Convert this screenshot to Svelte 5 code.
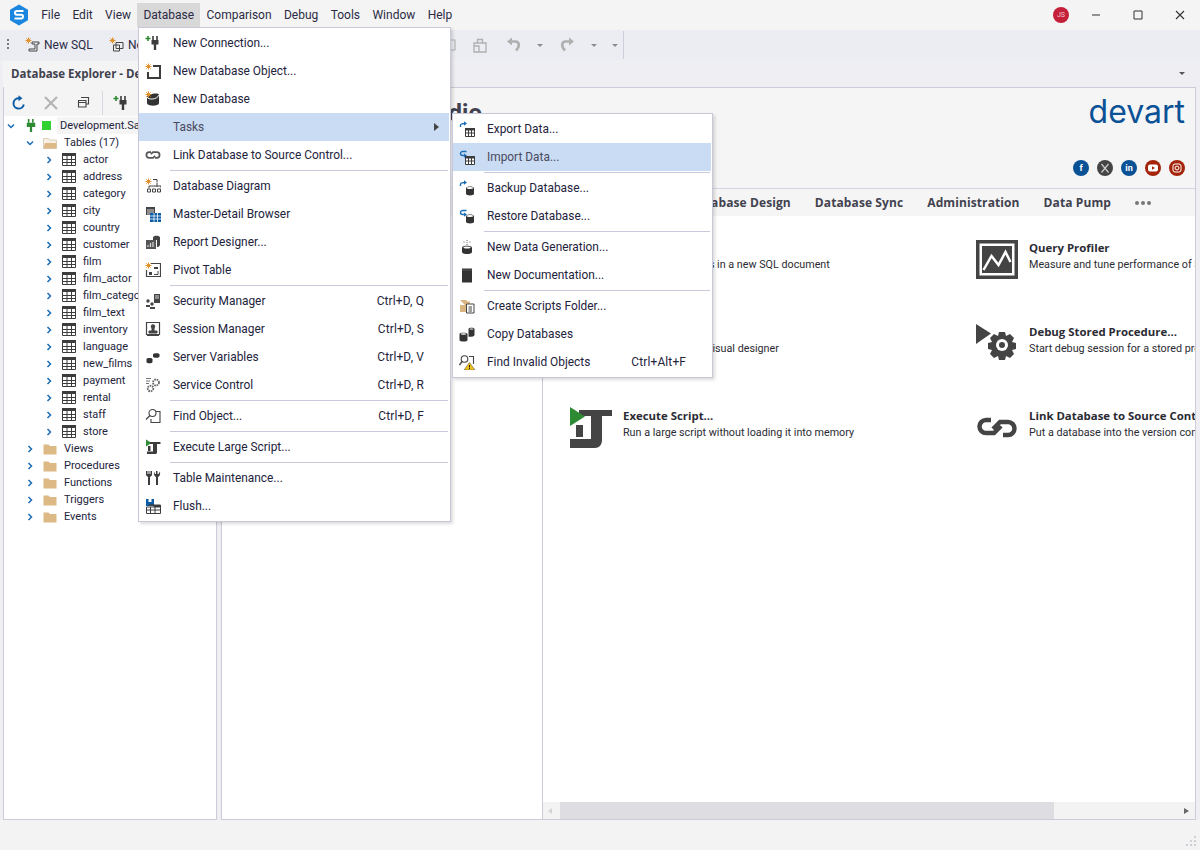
<script lang="ts">
  const star = '<path d="M3.5 .5v6M.5 3.5h6M1.4 1.4l4.2 4.2M5.6 1.4L1.4 5.6" stroke="#e0922f" fill="none"/>';
  const plug = '<path d="M8 1v4M12 1v4" stroke="#3c3c3c" stroke-width="1.6"/><path d="M6.5 5h7v4.5h-2.3V15H8.8V9.5H6.5z" fill="#3c3c3c"/>';
  const greenPlus = '<path d="M3 1v5M.5 3.5h5" stroke="#2f8a34" stroke-width="1.6"/>';
  const grid = '<path d="M6.5 7.5h9v8h-9z" fill="#fff" stroke="#3c3c3c"/><path d="M6 7h10v2.5H6z" fill="#3c3c3c"/><path d="M6.5 12h9M9.5 9v6M12.5 9v6" stroke="#3c3c3c"/>';
  const barrel = '<path d="M7 8.2c0-2.2 8-2.2 8 0v5.600c0 2.2-8 2.2-8 0z" fill="#333"/><ellipse cx="11" cy="8" rx="3.2" ry="1.1" fill="#fff"/>';
  const arrowOut = '<path d="M1.5 6V4.5C1.5 3 3 2.5 6 2.5" fill="none" stroke="#1a6cb5" stroke-width="1.4"/><path d="M5 .3l3 2.2-3 2.2z" fill="#1a6cb5"/>';
  const arrowIn = '<path d="M7.5 2.5H4C2 2.5 1.5 3.5 1.5 4.5S2 6.5 4 6.5h2" fill="none" stroke="#1a6cb5" stroke-width="1.4"/><path d="M5 4.5l3 2-3 2.2z" fill="#1a6cb5"/>';

  const icons: Record<string, string> = {
    connection: greenPlus + plug,
    object: star + '<path d="M8 3h7v12H3V9" fill="none" stroke="#3c3c3c" stroke-width="2"/>',
    database: '<path d="M2 6c0-3 12-5 12-2v8c0 3.5-12 3.5-12 0z" fill="#333"/><path d="M2 6c1 3 10 3 12-2" fill="none" stroke="#fff"/>' + star,
    link: '<path d="M6 5.2H4.2a2.8 2.8 0 0 0 0 5.6H8l2.2-2M10 10.8h1.8a2.8 2.8 0 0 0 0-5.6H8L5.8 7.2" fill="none" stroke="#555" stroke-width="1.7"/>',
    diagram: star + '<path d="M8 1.5h4v3M12 5v4M4 10V8h12v2" fill="none" stroke="#444"/><path d="M2.5 11h3v3h-3zM7.5 11h3v3h-3zM12.5 11h3v3h-3z" fill="none" stroke="#444"/>',
    master: '<path d="M1 1h9v8H1z" fill="#444"/><path d="M2 4h7M2 6h7M2 8h7" stroke="#fff" stroke-width=".8"/><path d="M5 7h11v9H5z" fill="#0d5ca6"/><path d="M5 10h11M5 13h11M9 7v9M12.5 7v9" stroke="#fff" stroke-width=".8"/>',
    report: '<path d="M1 6h10v9H1z" fill="#555"/><path d="M3 13V11M5.5 13V9M8 13V8" stroke="#ddd" stroke-width="1.2"/><path d="M8 3.5C8 1 15 1 15 3.5v7c0 2-2 2.5-3 2.5V6H8z" fill="#444"/>',
    pivot: star + '<path d="M6 1.5h9.5v13H1.5V8" fill="none" stroke="#444" stroke-width="1.2"/><path d="M4 10h3v3H4zM9 5h4v2H9z" fill="#444"/><path d="M9 12.5h4V9" fill="none" stroke="#444"/>',
    security: '<path d="M9 1h6v9H9z" fill="#444"/><path d="M10 3h4M10 5h4" stroke="#fff" stroke-width=".8"/><circle cx="3" cy="8" r="1.7" fill="#444"/><circle cx="7" cy="11" r="1.7" fill="#444"/><path d="M1 12h4v2H1zM5 14h5v2H5z" fill="#444"/>',
    session: '<path d="M1.5 1.5h13v12h-13z" fill="none" stroke="#444" stroke-width="1.2"/><circle cx="8" cy="5.5" r="2.2" fill="#444"/><path d="M7 7h2v3H7zM4 10h8v2H4zM2 14.5h12" stroke="#444" fill="#444"/>',
    variables: '<path d="M1.5 10c0-1.5 6-1.5 6 0v3c0 1.7-6 1.7-6 0z" fill="#333"/><path d="M8 5.5c0-1.8 6.5-1.8 6.5 0v2c0 1.7-6.5 1.7-6.5 0z" fill="#333"/>',
    service: '<circle cx="11" cy="5.5" r="3" fill="none" stroke="#666" stroke-width="1.8" stroke-dasharray="1.6 .8"/><circle cx="5.5" cy="11.5" r="2.8" fill="none" stroke="#666" stroke-width="1.8" stroke-dasharray="1.6 .8"/><path d="M1 1.5h5M1 4h4M1 6.5h3" stroke="#777"/>',
    find: '<circle cx="7.5" cy="5" r="3.5" fill="#fff" stroke="#444" stroke-width="1.1"/><path d="M5 7.5L1 11.5" stroke="#444" stroke-width="1.3"/><path d="M11 3.5h4v11H6V11" fill="none" stroke="#444" stroke-width="1.1"/>',
    script: '<path d="M1 .5l5.5 3.5L1 7.5z" fill="#2f8a34"/><path d="M5 3h10.5v2H12v8.5c0 1-1 1.5-2 1.5H2v-2.5h6V5H5z" fill="#3c3c3c"/><path d="M3 7h2.5v5H3z" fill="#3c3c3c"/>',
    maintenance: '<path d="M1 1v3.5c0 1 1 2 2 2.3V15h2V6.800c1-.3 2-1.3 2-2.3V1L5.5 1v3h-1V1h-1v3h-1V1z" fill="#3c3c3c"/><path d="M9 1.5c-.5 3 .5 5 2 5.5V15h2V7c1.5-.5 2.5-2.5 2-5.5L13.5 4h-1V1h-1.5v3H10z" fill="#3c3c3c"/>',
    flush: '<path d="M1 1h8v7H1z" fill="#0d5ca6"/><path d="M3.5 1h3v3h-3z" fill="#fff"/><path d="M4 7h11.5v8.5H1.5V9H9V7z" fill="#fff" stroke="#3c3c3c"/><path d="M9 7h6.5v2.5H9z" fill="#3c3c3c"/><path d="M1.5 12h14M5.5 9v6.5M10 9v6.5" stroke="#3c3c3c"/>',
    export: arrowOut + grid,
    import: arrowIn + grid,
    backup: arrowOut + barrel,
    restore: arrowIn + barrel,
    generation: '<path d="M3 8.5c0-2.2 10-2.2 10 0v4.5c0 2.8-10 2.8-10 0z" fill="#333"/><ellipse cx="8" cy="8.5" rx="3.5" ry="1.1" fill="#fff"/><path d="M8 1v5M5 2.5v2M11 2.5v2" stroke="#666" stroke-dasharray="1 1"/>',
    documentation: '<path d="M3 1.5h10v14H3z" fill="#333"/><path d="M3 3h10" stroke="#666" stroke-width=".7"/>',
    folder: '<path d="M1 2h6l1.5 1.5H11V8H1v6h5V7z" fill="#d8b583"/><path d="M1 7h8v7H1z" fill="#d8b583"/><path d="M7.5 6h7.5v9H7.5z" fill="#fff" stroke="#444"/><path d="M9.5 9h3.5M9.5 11h3.5M9.5 13h3.5" stroke="#444"/>',
    copy: '<path d="M.5 8c0-1.8 8-1.8 8 0v6c0 2-8 2-8 0z" fill="#333"/><ellipse cx="4.5" cy="8" rx="2.8" ry=".8" fill="#fff"/><path d="M9.5 3c0-1.8 6-1.8 6 0v6c0 1.3-2 1.8-6 1.8V6z" fill="#333"/><ellipse cx="12.5" cy="3" rx="2" ry=".6" fill="#fff"/>',
    invalid: '<circle cx="5.5" cy="5" r="3.3" fill="#fff" stroke="#444" stroke-width="1.1"/><path d="M3 7.5L.5 11" stroke="#444" stroke-width="1.3"/><path d="M10 2.5h4.5V10" fill="none" stroke="#444" stroke-width="1.1"/><path d="M10.5 8.5L16 16H5z" fill="#f2c21a" stroke="#444" stroke-width=".5"/><path d="M10.5 11v2.5M10.5 14v1" stroke="#222"/>'
  };

  type Item = { label?: string; icon?: string; keys?: string; sep?: boolean; active?: boolean; arrow?: boolean };

  const databaseMenu: Item[] = [
    { label: 'New Connection...', icon: 'connection' },
    { label: 'New Database Object...', icon: 'object' },
    { label: 'New Database', icon: 'database' },
    { label: 'Tasks', active: true, arrow: true },
    { label: 'Link Database to Source Control...', icon: 'link' },
    { sep: true },
    { label: 'Database Diagram', icon: 'diagram' },
    { label: 'Master-Detail Browser', icon: 'master' },
    { label: 'Report Designer...', icon: 'report' },
    { label: 'Pivot Table', icon: 'pivot' },
    { sep: true },
    { label: 'Security Manager', icon: 'security', keys: 'Ctrl+D, Q' },
    { label: 'Session Manager', icon: 'session', keys: 'Ctrl+D, S' },
    { label: 'Server Variables', icon: 'variables', keys: 'Ctrl+D, V' },
    { label: 'Service Control', icon: 'service', keys: 'Ctrl+D, R' },
    { sep: true },
    { label: 'Find Object...', icon: 'find', keys: 'Ctrl+D, F' },
    { sep: true },
    { label: 'Execute Large Script...', icon: 'script' },
    { sep: true },
    { label: 'Table Maintenance...', icon: 'maintenance' },
    { label: 'Flush...', icon: 'flush' }
  ];

  const tasksMenu: Item[] = [
    { label: 'Export Data...', icon: 'export' },
    { label: 'Import Data...', icon: 'import', active: true },
    { sep: true },
    { label: 'Backup Database...', icon: 'backup' },
    { label: 'Restore Database...', icon: 'restore' },
    { sep: true },
    { label: 'New Data Generation...', icon: 'generation' },
    { label: 'New Documentation...', icon: 'documentation' },
    { sep: true },
    { label: 'Create Scripts Folder...', icon: 'folder' },
    { label: 'Copy Databases', icon: 'copy' },
    { label: 'Find Invalid Objects', icon: 'invalid', keys: 'Ctrl+Alt+F' }
  ];

  const menuBar = ['File', 'Edit', 'View', 'Database', 'Comparison', 'Debug', 'Tools', 'Window', 'Help'];
  const tables = ['actor', 'address', 'category', 'city', 'country', 'customer', 'film', 'film_actor', 'film_category', 'film_text', 'inventory', 'language', 'new_films', 'payment', 'rental', 'staff', 'store'];
  const folders = ['Views', 'Procedures', 'Functions', 'Triggers', 'Events'];
  const tabs = ['Development', 'Database Design', 'Database Sync', 'Administration', 'Data Pump'];
</script>

{#snippet menuRows(items: Item[])}
  {#each items as item}
    {#if item.sep}
      <div class="sep"></div>
    {:else}
      <div class="row" class:active={item.active}>
        <span class="row-icon">
          {#if item.icon}
            <svg viewBox="0 0 16 16" width="16" height="16">{@html icons[item.icon]}</svg>
          {/if}
        </span>
        <span class="row-label">{item.label}</span>
        {#if item.keys}<span class="row-keys">{item.keys}</span>{/if}
        {#if item.arrow}<span class="row-arrow"></span>{/if}
      </div>
    {/if}
  {/each}
{/snippet}

{#snippet chevron(open: boolean)}
  <svg class="chevron" viewBox="0 0 8 8" width="8" height="8">
    {#if open}
      <path d="M1 2.5l3 3 3-3" fill="none" stroke="#1a6cb5" stroke-width="1.5"/>
    {:else}
      <path d="M2.5 1l3 3-3 3" fill="none" stroke="#1a6cb5" stroke-width="1.5"/>
    {/if}
  </svg>
{/snippet}

{#snippet folderIcon()}
  <svg class="tree-icon" viewBox="0 0 14 12" width="14" height="12">
    <path d="M.5 1.5h5L7 3h6.5v8.5H.5z" fill="#dcb985"/>
  </svg>
{/snippet}

<div class="app">
  <header class="titlebar">
    <svg class="logo" viewBox="0 0 20 22" width="20" height="22">
      <path d="M10 .5l9 5.2v10.6l-9 5.2-9-5.2V5.7z" fill="#1a86e0"/>
      <path d="M14.5 7H7.8C6.5 7 6 7.7 6 8.8s.5 1.9 1.8 1.9h4.4c1.3 0 1.8.8 1.8 1.8s-.5 2-1.8 2H5.5" fill="none" stroke="#fff" stroke-width="2"/>
    </svg>
    <nav class="menubar">
      {#each menuBar as name}
        <span class="menubar-item" class:open={name === 'Database'}>{name}</span>
      {/each}
    </nav>
    <span class="avatar">JS</span>
    <div class="window-buttons">
      <svg viewBox="0 0 10 10" width="10" height="10"><path d="M1 5h8" stroke="#333"/></svg>
      <svg viewBox="0 0 10 10" width="10" height="10"><path d="M1 1h8v8H1z" fill="none" stroke="#333"/></svg>
      <svg viewBox="0 0 10 10" width="10" height="10"><path d="M1 1l8 8M9 1l-8 8" stroke="#333" stroke-width="1.1"/></svg>
    </div>
  </header>

  <div class="toolbar">
    <span class="grip"></span>
    <button class="tool first">
      <svg viewBox="0 0 16 16" width="16" height="16">{@html star}<path d="M7 5h7v2h-2v7H4v-2h6V7H7z" fill="none" stroke="#444"/></svg>
      New SQL
    </button>
    <button class="tool second">
      <svg viewBox="0 0 16 16" width="16" height="16">{@html star}<path d="M7 5.5h7v6H7zM4.5 8h6v6h-6z" fill="#eceef2" stroke="#444"/></svg>
      New Query
    </button>
    <div class="tool-rest">
      <svg viewBox="0 0 16 16" width="16" height="16"><path d="M1 3h10v10H6" fill="none" stroke="#b4b4b4" stroke-width="1.2"/></svg>
      <svg class="bag" viewBox="0 0 16 16" width="16" height="16"><path d="M2 6h12v9H2zM2 9h5v6M5.5 6V2.5h5V6" fill="none" stroke="#b0b0b0" stroke-width="1.3"/></svg>
      <svg class="undo" viewBox="0 0 16 16" width="16" height="16"><path d="M3 4.5h6.5c3.5 0 5 4.5 .5 9" fill="none" stroke="#b0b0b0" stroke-width="2.6"/><path d="M6 .5v8L1 4.5z" fill="#b0b0b0"/></svg>
      <span class="caret c1"></span>
      <svg class="redo" viewBox="0 0 16 16" width="16" height="16"><path d="M13 4.5H6.5c-3.5 0-5 4.5-.5 9" fill="none" stroke="#b0b0b0" stroke-width="2.6"/><path d="M10 .5v8l5-4z" fill="#b0b0b0"/></svg>
      <span class="caret c2"></span>
      <span class="caret c3"></span>
      <span class="tool-sep"></span>
    </div>
  </div>

  <div class="tabstrip">
    <div class="panel-tab">Database Explorer - Development.Sakila</div>
    <span class="caret strip-caret"></span>
  </div>

  <main class="workspace">
    <aside class="explorer">
      <div class="explorer-tools">
        <svg viewBox="0 0 16 16" width="16" height="16"><path d="M12.8 9.5A5.2 5.2 0 1 1 8 3.2" fill="none" stroke="#0d5ca6" stroke-width="2"/><path d="M7.5 .2v6l4-3z" fill="#0d5ca6"/></svg>
        <svg class="gap-x" viewBox="0 0 16 16" width="16" height="16"><path d="M2 2l12 12M14 2L2 14" stroke="#b4b4b4" stroke-width="2.2"/></svg>
        <svg class="gap-w" viewBox="0 0 16 16" width="16" height="16"><path d="M6 2.5h7.5V9H11M3.5 5.5H11V12H3.5zM3.5 7.5H11" fill="none" stroke="#444" stroke-width="1.1"/></svg>
        <span class="explorer-sep"></span>
        <svg viewBox="0 0 16 16" width="16" height="16">{@html icons.connection}</svg>
      </div>
      <div class="tree">
        <div class="tree-row root">
          {@render chevron(true)}
          <svg class="root-plug" viewBox="0 0 12 16" width="12" height="15"><path d="M3.5 1v4M8 1v4" stroke="#2f8a34" stroke-width="1.7"/><path d="M1.5 5h9v4.5H7.2V15H4.8V9.5H1.5z" fill="#2f8a34"/></svg>
          <span class="root-status"></span>
          <span class="root-label">Development.Sakila</span>
        </div>
        <div class="tree-row level1">
          {@render chevron(true)}
          <svg class="tree-icon" viewBox="0 0 14 12" width="14" height="12"><path d="M.5 1.5h5L7 3h6.5v8.5H.5z" fill="#f6efe2" stroke="#d8cfbf"/><path d="M2 6h11.5v5.5H.5z" fill="#dcb985"/></svg>
          <span>Tables (17)</span>
        </div>
        {#each tables as table}
          <div class="tree-row level2">
            {@render chevron(false)}
            <svg class="tree-icon" viewBox="0 0 14 13" width="14" height="13"><path d="M.5 .5h13v12H.5z" fill="#fff" stroke="#3c3c3c"/><path d="M0 0h14v3H0z" fill="#3c3c3c"/><path d="M.5 6.5h13M.5 9.5h13M5 3v9M9.5 3v9" stroke="#3c3c3c"/></svg>
            <span>{table}</span>
          </div>
        {/each}
        {#each folders as folder}
          <div class="tree-row level1">
            {@render chevron(false)}
            {@render folderIcon()}
            <span>{folder}</span>
          </div>
        {/each}
      </div>
    </aside>

    <section class="document">
      <div class="doc-header">
        <div class="brand-row">
          <div class="product">dbForge Studio</div>
          <div class="brand-side">
            <div class="devart">devart</div>
            <div class="socials">
              <span class="social blue">f</span>
              <span class="social grey">
                <svg viewBox="0 0 16 16" width="16" height="16"><path d="M4.5 4l7 8.5M11.5 4l-7 8.5" stroke="#ccc" stroke-width="1.2"/></svg>
              </span>
              <span class="social blue">in</span>
              <span class="social red">
                <svg viewBox="0 0 16 16" width="16" height="16"><rect x="3" y="4.5" width="10" height="7" rx="2" fill="#fff"/><path d="M7 6.2v3.6L10 8z" fill="#a5250c"/></svg>
              </span>
              <span class="social red">
                <svg viewBox="0 0 16 16" width="16" height="16"><rect x="4" y="4" width="8" height="8" rx="2" fill="none" stroke="#fff"/><circle cx="8" cy="8" r="1.9" fill="none" stroke="#fff"/></svg>
              </span>
            </div>
          </div>
        </div>
        <div class="doc-tabs">
          {#each tabs as tab}
            <span class="doc-tab">{tab}</span>
          {/each}
          <span class="doc-more"><i></i><i></i><i></i></span>
        </div>
      </div>
      <div class="doc-body">
        <div class="doc-side"></div>
        <div class="doc-main">
          <div class="actions">
            <div class="action">
              <span class="action-icon"></span>
              <div><h4>SQL Editor</h4><p>Create SQL queries in a new SQL document</p></div>
            </div>
            <div class="action">
              <svg class="action-icon" viewBox="0 0 42 40"><path d="M0 0h42v39H0z" fill="#444"/><path d="M3.500 3.500h35v32h-35z" fill="#fff"/><path d="M6 6h30v27H6z" fill="#444"/><path d="M7.5 30l8-14 7 9 7-13 5 10" fill="none" stroke="#fff" stroke-width="2.5"/></svg>
              <div><h4>Query Profiler</h4><p>Measure and tune performance of SQL queries</p></div>
            </div>
            <div class="action">
              <span class="action-icon"></span>
              <div><h4>Query Builder</h4><p>Build queries in a visual designer</p></div>
            </div>
            <div class="action">
              <svg class="action-icon" viewBox="0 0 42 40"><path d="M0 0l15 9.5L0 20z" fill="#444"/><path d="M23 8h6l1 4 4-2 4 4-2 4 4 1v6l-4 1 2 4-4 4-4-2-1 4h-6l-1-4-4 2-4-4 2-4-4-1v-6l4-1-2-4 4-4 4 2z" fill="#444"/><circle cx="26" cy="21" r="6" fill="#fff"/><circle cx="26" cy="21" r="3" fill="#444"/></svg>
              <div><h4>Debug Stored Procedure...</h4><p>Start debug session for a stored procedure</p></div>
            </div>
            <div class="action">
              <svg class="action-icon" viewBox="0 0 42 42"><path d="M9 3h33v6H32v24c0 5-3 8-7 8H0v-9h21V9H9z" fill="#444"/><path d="M6 18h7v12H6z" fill="#444"/><path d="M0 0l15 9.5L0 19z" fill="#2f8a34"/></svg>
              <div><h4>Execute Script...</h4><p>Run a large script without loading it into memory</p></div>
            </div>
            <div class="action">
              <svg class="action-icon" viewBox="0 0 42 40"><path d="M15 12H10a6.5 6.5 0 0 0 0 13h8l7-7M27 27h5a6.5 6.5 0 0 0 0-13h-8l-7 7" fill="none" stroke="#444" stroke-width="4.5"/></svg>
              <div><h4>Link Database to Source Control...</h4><p>Put a database into the version control system</p></div>
            </div>
          </div>
          <div class="hscroll">
            <span class="hs-arrow left"></span>
            <span class="hs-thumb"></span>
            <span class="hs-arrow right"></span>
          </div>
        </div>
      </div>
    </section>
  </main>

  <footer class="statusbar">
    <svg viewBox="0 0 12 12" width="12" height="12"><path d="M9 1h2v2H9zM5 5h2v2H5zM9 5h2v2H9zM1 9h2v2H1zM5 9h2v2H5zM9 9h2v2H9z" fill="#cfcfd6"/></svg>
  </footer>

  <div class="menu menu-database">{@render menuRows(databaseMenu)}</div>
  <div class="menu menu-tasks">{@render menuRows(tasksMenu)}</div>
</div>

<style>
  :global(body) {
    margin: 0;
    font-family: Roboto, "Open Sans", sans-serif;
    font-size: 11px;
    color: #23233c;
  }

  .app {
    position: relative;
    width: 1200px;
    height: 850px;
    display: flex;
    flex-direction: column;
    overflow: hidden;
    background: #eeeef3;
  }

  .titlebar {
    height: 30px;
    flex: none;
    display: flex;
    align-items: center;
    background: #f4f4f4;
  }
  .logo { margin-left: 9px; flex: none; }
  .menubar { display: flex; margin-left: 6px; height: 24px; flex: 1; }
  .menubar-item {
    padding: 0 6.2px;
    line-height: 24px;
    font-size: 12px;
    color: #2b2b45;
  }
  .menubar-item.open { background: #d8d8d8; }
  .avatar {
    width: 16px;
    height: 16px;
    border-radius: 50%;
    background: #c4203a;
    color: #f3c8cf;
    font-size: 7px;
    line-height: 16px;
    text-align: center;
  }
  .window-buttons {
    display: flex;
    gap: 32px;
    padding: 0 15px 0 22px;
  }

  .toolbar {
    height: 30px;
    flex: none;
    display: flex;
    align-items: center;
    background: #ecedf2;
  }
  .grip {
    width: 2px;
    height: 12px;
    margin: 0 16px 0 7px;
    background: repeating-linear-gradient(#77777d 0 2px, transparent 2px 4px);
  }
  .tool {
    display: flex;
    align-items: center;
    justify-content: flex-start;
    gap: 3px;
    padding: 0;
    border: 0;
    background: none;
    font: inherit;
    font-size: 12px;
    color: #2b2b45;
    white-space: nowrap;
  }
  .tool.first { width: 84px; }
  .tool.second { width: 80px; }
  .tool-rest {
    display: flex;
    align-items: center;
    margin-left: 255px;
    height: 28px;
  }
  .bag { margin-left: 12px; }
  .undo { margin-left: 18px; }
  .redo { margin-left: 16.5px; }
  .caret {
    width: 0;
    height: 0;
    border-left: 3.5px solid transparent;
    border-right: 3.5px solid transparent;
    border-top: 3.5px solid #8d8d8d;
  }
  .c1 { margin-left: 14.5px; }
  .c2 { margin-left: 15.5px; }
  .c3 { margin-left: 15px; }
  .tool-sep { width: 1px; height: 28px; background: #cfcfdb; margin-left: 5.5px; }

  .tabstrip {
    height: 27px;
    flex: none;
    display: flex;
    align-items: flex-end;
    justify-content: space-between;
    padding: 0 4px 0 3px;
  }
  .panel-tab {
    width: 214px;
    box-sizing: border-box;
    height: 26px;
    padding-left: 8px;
    line-height: 26px;
    font-family: "Open Sans", sans-serif;
    font-weight: 700;
    font-size: 11.5px;
    color: #42424f;
    background: #f4f4f4;
    white-space: nowrap;
    overflow: hidden;
  }
  .strip-caret { margin: 0 11px 12px 0; border-top-color: #555; }

  .workspace {
    flex: 1;
    min-height: 0;
    display: flex;
    gap: 4px;
    padding: 0 4px 0 3px;
  }

  .explorer {
    width: 214px;
    flex: none;
    box-sizing: border-box;
    border: 1px solid #cbcbd9;
    border-top: 0;
    background: #fff;
    display: flex;
    flex-direction: column;
  }
  .explorer-tools {
    height: 30px;
    box-sizing: border-box;
    flex: none;
    display: flex;
    align-items: center;
    padding: 2px 0 0 7px;
    background: #f4f4f4;
    border-bottom: 1px solid #fff;
  }
  .gap-x { margin-left: 16px; }
  .gap-w { margin-left: 16px; }
  .explorer-sep { width: 1px; height: 24px; background: #d8d8e0; margin: 0 10px 0 11px; }

  .tree-row {
    height: 17px;
    display: flex;
    align-items: center;
    line-height: 17px;
    color: #23233c;
    white-space: nowrap;
  }
  .chevron { flex: none; }
  .tree-icon { flex: none; }
  .root { padding-left: 3px; }
  .root-plug { margin-left: 10px; }
  .root-status { width: 9px; height: 9px; background: #30d130; margin-left: 5px; }
  .root-label { margin-left: 6px; background: #f4f4f4; flex: 1; padding-left: 3px; overflow: hidden; }
  .level1 { padding-left: 22px; }
  .level1 .tree-icon { margin-left: 9px; margin-right: 7px; }
  .level2 { padding-left: 41px; }
  .level2 .tree-icon { margin-left: 9px; margin-right: 7px; }

  .document {
    flex: 1;
    min-width: 0;
    display: flex;
    flex-direction: column;
    border: 1px solid #cbcbd9;
    background: #fff;
  }
  .doc-header { flex: none; background: #f5f5f5; }
  .brand-row {
    height: 100px;
    display: flex;
    justify-content: space-between;
    border-bottom: 1px solid #d4d4e2;
  }
  .product {
    width: 260px;
    margin-top: 10px;
    font-size: 24px;
    line-height: 30px;
    font-weight: 700;
    color: #42424f;
    text-align: right;
    white-space: nowrap;
  }
  .brand-side {
    display: flex;
    flex-direction: column;
    align-items: flex-end;
    padding-right: 10px;
  }
  .devart {
    margin-top: 2px;
    font-family: Inter, sans-serif;
    font-size: 32px;
    line-height: 44px;
    color: #0a5196;
  }
  .socials { display: flex; gap: 8px; margin-top: 26px; }
  .social {
    width: 16px;
    height: 16px;
    border-radius: 50%;
    color: #fff;
    font-size: 9px;
    font-weight: 700;
    line-height: 16px;
    text-align: center;
    overflow: hidden;
  }
  .social svg { display: block; }
  .social.blue { background: #0a5196; }
  .social.grey { background: #444; }
  .social.red { background: #a5250c; }
  .doc-tabs {
    height: 27px;
    display: flex;
    align-items: center;
    justify-content: flex-end;
    gap: 24px;
    padding-right: 44px;
    font-family: "Open Sans", sans-serif;
    font-weight: 700;
    font-size: 12px;
    letter-spacing: .1px;
    color: #42424f;
  }
  .doc-more { display: flex; gap: 2px; }
  .doc-more i { width: 4px; height: 4px; border-radius: 50%; background: #777; }

  .doc-body { flex: 1; min-height: 0; display: flex; }
  .doc-side { width: 320px; flex: none; border-right: 1px solid #cbcbd9; }
  .doc-main { flex: 1; min-width: 0; display: flex; flex-direction: column; }
  .actions {
    flex: 1;
    display: grid;
    grid-template-columns: 406px 1fr;
    grid-auto-rows: 84px;
    align-content: start;
    padding: 23px 0 0 27px;
    overflow: hidden;
  }
  .action {
    display: flex;
    gap: 11px;
    min-width: 0;
    white-space: nowrap;
    overflow: hidden;
  }
  .action-icon { width: 42px; height: 42px; flex: none; }
  .action h4 {
    margin: 0;
    font-family: "Open Sans", sans-serif;
    font-size: 11.4px;
    line-height: 17px;
    font-weight: 700;
    color: #2b2b33;
  }
  .action p { margin: 0; line-height: 17px; font-size: 10.75px; color: #2b2b33; }

  .hscroll {
    height: 17px;
    flex: none;
    display: flex;
    align-items: center;
    background: #f3f3f3;
  }
  .hs-arrow {
    width: 0;
    height: 0;
    border-top: 3.5px solid transparent;
    border-bottom: 3.5px solid transparent;
  }
  .hs-arrow.left { margin: 0 8px 0 5px; border-right: 4px solid #d4d4d4; }
  .hs-thumb { width: 494px; height: 17px; background: #dddde2; margin-right: auto; }
  .hs-arrow.right { margin-right: 6px; border-left: 5px solid #666; }

  .statusbar {
    height: 30px;
    box-sizing: border-box;
    flex: none;
    display: flex;
    justify-content: flex-end;
    align-items: flex-end;
    padding: 0 3px 3px 0;
    background: #f3f3f3;
  }

  .menu {
    position: absolute;
    box-sizing: border-box;
    padding: 1px 1px 1px 0;
    background: #fff;
    border: 1px solid #c8c8d8;
    box-shadow: 2px 2px 3px rgba(0, 0, 0, .14);
    font-size: 11.9px;
    z-index: 5;
  }
  .menu-database { left: 138px; top: 27px; width: 313px; }
  .menu-tasks { left: 452px; top: 113px; width: 261px; z-index: 6; }

  .row {
    height: 28px;
    display: flex;
    align-items: center;
    color: #23233c;
    white-space: nowrap;
  }
  .row.active { background: #c9dcf3; color: #4a4a5e; }
  .row-icon {
    width: 34px;
    flex: none;
    display: flex;
    padding-left: 6px;
    box-sizing: border-box;
  }
  .row-label { flex: 1; }
  .row-keys { margin-right: 25px; letter-spacing: .15px; }
  .row-arrow {
    width: 0;
    height: 0;
    margin-right: 10px;
    border-top: 4px solid transparent;
    border-bottom: 4px solid transparent;
    border-left: 5px solid #444;
  }
  .sep {
    height: 1px;
    margin: 1px 1px 1px 31px;
    background: #c9c9dc;
  }
</style>
